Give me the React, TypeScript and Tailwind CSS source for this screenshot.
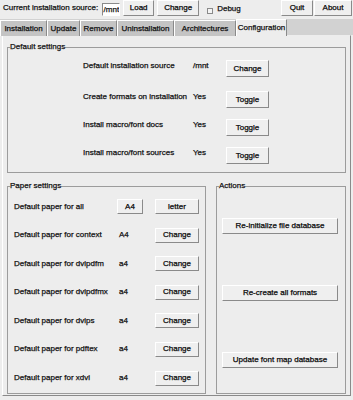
import type { ReactNode } from "react";

const raised =
  "bg-[#efefef] border border-t-white border-l-white border-r-[#8a8a8a] border-b-[#8a8a8a] leading-none text-black";

function Btn({ children, className = "" }: { children: ReactNode; className?: string }) {
  return <button className={`${raised} ${className}`}>{children}</button>;
}

const tabs = [
  { name: "Installation", w: "w-[47px]" },
  { name: "Update", w: "w-[33px]" },
  { name: "Remove", w: "w-[37px]" },
  { name: "Uninstallation", w: "w-[57px]" },
  { name: "Architectures", w: "w-[62px]" },
];

const defaults = [
  { label: "Default installation source", value: "/mnt", action: "Change", mt: "mt-[8px]" },
  { label: "Create formats on installation", value: "Yes", action: "Toggle", mt: "mt-[14px]" },
  { label: "Install macro/font docs", value: "Yes", action: "Toggle", mt: "mt-[11px]" },
  { label: "Install macro/font sources", value: "Yes", action: "Toggle", mt: "mt-[11px]" },
];

const papers = [
  { prog: "context", value: "A4" },
  { prog: "dvipdfm", value: "a4" },
  { prog: "dvipdfmx", value: "a4" },
  { prog: "dvips", value: "a4" },
  { prog: "pdftex", value: "a4" },
  { prog: "xdvi", value: "a4" },
];

export default function App() {
  return (
    <div className="w-[353px] h-[400px] bg-[#ededed] text-[8px] text-[#111] [-webkit-text-stroke:0.25px_#111] overflow-hidden font-['Liberation_Sans',Arial,sans-serif]">
      {/* top bar */}
      <div className="h-[19px] flex items-start">
        <span className="ml-[3px] mt-[4px] leading-none">Current installation source:</span>
        <div className="ml-[4px] mt-[3px] w-[18px] h-[13px] bg-white border border-t-[#8a8a8a] border-l-[#8a8a8a] border-r-white border-b-white overflow-hidden flex justify-end items-center leading-none">
          <span className="whitespace-nowrap">/mnt</span>
        </div>
        <Btn className="ml-[3px] w-[31px] h-[16px]">Load</Btn>
        <Btn className="ml-[3px] w-[42px] h-[16px]">Change</Btn>
        <span className="ml-[8px] mt-[8px] w-[6px] h-[6px] border border-[#8a8a8a] bg-[#f4f4f4]" />
        <span className="ml-[4px] mt-[5px] leading-none">Debug</span>
        <div className="flex-1" />
        <Btn className="w-[32px] h-[16px]">Quit</Btn>
        <Btn className="ml-[1px] w-[38px] h-[16px] mr-[1px]">About</Btn>
      </div>

      {/* tabs */}
      <div className="h-[16px] flex bg-[#d2d2d2]">
        {tabs.map((t) => (
          <div
            key={t.name}
            className={`${t.w} h-[16px] mt-[1px] bg-[#c4c4c4] border-l border-t border-r border-l-white border-t-white border-r-[#8a8a8a] flex items-center justify-center leading-none`}
          >
            {t.name}
          </div>
        ))}
        <div className="w-[51px] h-[17px] bg-[#ededed] border-l border-t border-r border-l-white border-t-white border-r-[#8a8a8a] flex items-center justify-center leading-none">
          Configuration
        </div>
      </div>

      {/* notebook panel */}
      <div className="ml-[2px] w-[349px] h-[361px] border border-l-white border-t-[#ededed] border-r-[#8a8a8a] border-b-[#8a8a8a] flex flex-col">
        <fieldset className="mt-[6px] ml-[4px] w-[339px] border border-[#9c9c9c] pb-[8px]">
          <legend className="ml-[2px] leading-[10px]">Default settings</legend>
          {defaults.map((r) => (
            <div key={r.label} className={`${r.mt} flex items-center`}>
              <span className="ml-[75px] w-[110px] mb-[5px] leading-none whitespace-nowrap">{r.label}</span>
              <span className="w-[33px] mb-[5px] leading-none">{r.value}</span>
              <Btn className="w-[43px] h-[17px]">{r.action}</Btn>
            </div>
          ))}
        </fieldset>

        <div className="mt-[8px] ml-[4px] flex gap-[10px]">
          <fieldset className="w-[199px] h-[213px] border border-[#9c9c9c]">
            <legend className="ml-[2px] leading-[10px]">Paper settings</legend>
            <div className="mt-[8px] flex flex-col gap-[13.6px]">
              <div className="flex items-center">
                <span className="ml-[6px] w-[103px] leading-none whitespace-nowrap">Default paper for all</span>
                <Btn className="w-[26px] h-[15px]">A4</Btn>
                <Btn className="ml-[12px] w-[44px] h-[15px]">letter</Btn>
              </div>
              {papers.map((p) => (
                <div key={p.prog} className="flex items-center">
                  <span className="ml-[6px] w-[105px] leading-none whitespace-nowrap">Default paper for {p.prog}</span>
                  <span className="w-[36px] leading-none">{p.value}</span>
                  <Btn className="w-[44px] h-[15px]">Change</Btn>
                </div>
              ))}
            </div>
          </fieldset>

          <fieldset className="w-[130px] h-[213px] border border-[#9c9c9c]">
            <legend className="ml-[2px] leading-[10px]">Actions</legend>
            <div className="mt-[27px] ml-[5px] flex flex-col gap-[51px]">
              <Btn className="w-[116px] h-[16px]">Re-initialize file database</Btn>
              <Btn className="w-[116px] h-[16px]">Re-create all formats</Btn>
              <Btn className="w-[116px] h-[16px]">Update font map database</Btn>
            </div>
          </fieldset>
        </div>
      </div>
    </div>
  );
}
